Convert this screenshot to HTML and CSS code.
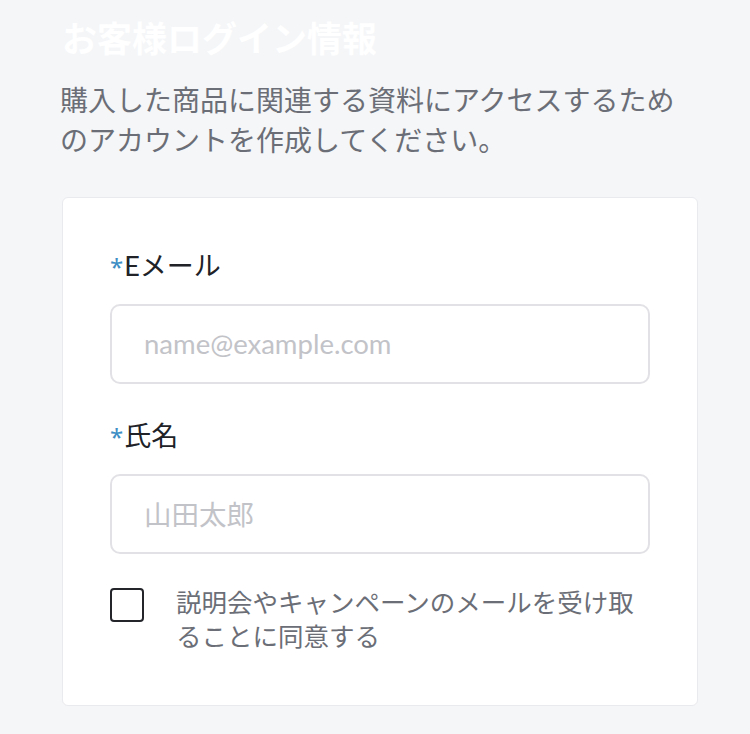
FILE: index.html
```html
<!DOCTYPE html>
<html lang="ja">
<head>
<meta charset="utf-8">
<link rel="stylesheet" href="styles.css">
</head>
<body>
<div class="page">
  <h1 class="title">お客様ログイン情報</h1>
  <p class="desc">購入した商品に関連する資料にアクセスするためのアカウントを作成してください。</p>
  <div class="card">
    <div class="field">
      <label class="label"><span class="req">*</span>Eメール</label>
      <div class="input"><span class="ph">name@example.com</span></div>
    </div>
    <div class="field">
      <label class="label"><span class="req">*</span>氏名</label>
      <div class="input"><span class="ph">山田太郎</span></div>
    </div>
    <div class="check">
      <span class="box"></span>
      <span class="check-text">説明会やキャンペーンのメールを受け取ることに同意する</span>
    </div>
  </div>
</div>
</body>
</html>
```

FILE: styles.css
```css
html, body {
  margin: 0;
  padding: 0;
  background: #f5f6f8;
}
body {
  font-family: Lato, "Noto Sans CJK JP", sans-serif;
  width: 750px;
  height: 734px;
  overflow: hidden;
}
.page {
  padding: 0 52px 0 62px;
}
.title {
  margin: 0;
  padding-top: 16px;
  font-size: 35px;
  line-height: 44px;
  font-weight: 700;
  color: #ffffff;
}
.desc {
  margin: 20px 10px 0 -2px;
  font-size: 28px;
  line-height: 40px;
  color: #6b6e76;
}
.card {
  margin-top: 37px;
  background: #ffffff;
  border: 1px solid #e9eaee;
  border-radius: 6px;
  padding: 48px 47px 52px 47px;
}
.field {
  display: flex;
  flex-direction: column;
}
.field + .field {
  margin-top: 32px;
}
.label {
  height: 40px;
  font-size: 27px;
  line-height: 40px;
  color: #202228;
}
.req {
  font-family: "Noto Sans", sans-serif;
  color: #3d8ec4;
  font-size: 24px;
  line-height: 0;
  margin-right: 1px;
}
.input {
  box-sizing: border-box;
  margin-top: 18px;
  height: 80px;
  border: 2px solid #e2e2e6;
  border-radius: 10px;
  display: flex;
  align-items: center;
  padding: 0 32px 2px;
}
.ph {
  font-size: 27.5px;
  color: #c2c3c8;
}
.check {
  margin-top: 32px;
  display: flex;
  align-items: flex-start;
}
.box {
  flex: none;
  width: 30px;
  height: 30px;
  border: 2px solid #23252b;
  border-radius: 4px;
  margin-top: 2px;
}
.check-text {
  margin-left: 32px;
  margin-top: -1px;
  font-size: 25.5px;
  line-height: 34px;
  color: #6b6e76;
}
```
